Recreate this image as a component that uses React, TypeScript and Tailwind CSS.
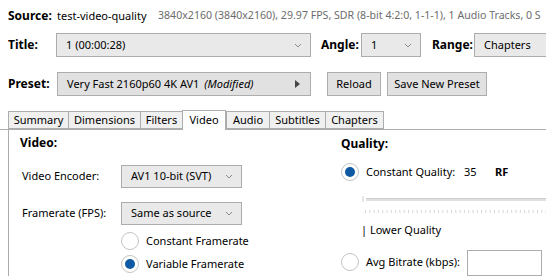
import React from "react";

const Chevron = () => (
  <svg width="8" height="5" viewBox="0 0 8 5" className="shrink-0">
    <polyline points="1,1 4,4 7,1" fill="none" stroke="#8a8a8a" strokeWidth="1" />
  </svg>
);

const Combo = ({ text, className }: { text: string; className: string }) => (
  <div className={"shrink-0 flex items-center justify-between border border-[#acacac] bg-[#e9e9e9] pl-[9px] pr-[8px] " + className}>
    <span className="whitespace-nowrap">{text}</span>
    <Chevron />
  </div>
);

const Radio = ({ on }: { on?: boolean }) => (
  <div className="w-[18px] h-[18px] rounded-full border border-[#c4c4c4] bg-white flex items-center justify-center shrink-0">
    {on && <div className="w-[10px] h-[10px] rounded-full bg-[#0f5aa3]" />}
  </div>
);

const Tab = ({ label, active, w }: { label: string; active?: boolean; w: string }) =>
  active ? (
    <div className={"shrink-0 h-[20px] border border-b-0 border-[#acacac] bg-white flex items-center justify-center -mb-px relative z-10 " + w}>
      {label}
    </div>
  ) : (
    <div className={"shrink-0 h-[18px] border border-r-0 border-[#acacac] bg-[#f0f0f0] flex items-center justify-center " + w}>
      {label}
    </div>
  );

export default function App() {
  return (
    <div
      className="w-[546px] h-[276px] overflow-hidden bg-white text-[11px] text-black flex flex-col"
      style={{ fontFamily: '"Noto Sans", "Segoe UI", sans-serif' }}
    >
      <div className="mt-[8px] h-[16px] pl-[8px] flex items-center whitespace-nowrap overflow-hidden">
        <span className="shrink-0 font-bold w-[49px] text-[12px]">Source:</span>
        <span className="shrink-0 w-[101px]">test-video-quality</span>
        <span className="shrink-0 text-[#6d6d6d] text-[10.6px]">
          3840x2160 (3840x2160), 29.97 FPS, SDR (8-bit 4:2:0, 1-1-1), 1 Audio Tracks, 0 S
        </span>
      </div>

      <div className="mt-[9px] h-[24px] pl-[8px] flex items-center whitespace-nowrap">
        <span className="shrink-0 font-bold w-[48px] text-[12px]">Title:</span>
        <Combo text="1  (00:00:28)" className="w-[255px] h-[24px]" />
        <span className="shrink-0 font-bold ml-[10px] w-[40px] text-[12px]">Angle:</span>
        <Combo text="1" className="w-[60px] h-[24px]" />
        <span className="shrink-0 font-bold ml-[11px] w-[42px] text-[12px]">Range:</span>
        <Combo text="Chapters" className="w-[90px] h-[24px]" />
      </div>

      <div className="mt-[15px] h-[24px] pl-[8px] flex items-center whitespace-nowrap">
        <span className="shrink-0 font-bold w-[49px] text-[12px]">Preset:</span>
        <div className="shrink-0 w-[254px] h-[24px] border border-[#adadad] bg-[#e1e1e1] flex items-center justify-between pl-[9px] pr-[10px]">
          <span>
            Very Fast 2160p60 4K AV1 <i className="ml-[2px]">(Modified)</i>
          </span>
          <svg width="5" height="8" viewBox="0 0 5 8">
            <polygon points="0,0 5,4 0,8" fill="#444" />
          </svg>
        </div>
        <div className="shrink-0 ml-[16px] w-[54px] h-[24px] border border-[#adadad] bg-[#e1e1e1] flex items-center justify-center">
          Reload
        </div>
        <div className="shrink-0 ml-[6px] w-[100px] h-[24px] border border-[#adadad] bg-[#e1e1e1] flex items-center justify-center">
          Save New Preset
        </div>
      </div>

      <div className="mt-[14px] pl-[8px] flex items-end whitespace-nowrap border-b border-[#acacac]">
        <Tab label="Summary" w="w-[60px]" />
        <Tab label="Dimensions" w="w-[72px]" />
        <Tab label="Filters" w="w-[42px]" />
        <Tab label="Video" w="w-[44px]" active />
        <Tab label="Audio" w="w-[43px]" />
        <Tab label="Subtitles" w="w-[56px]" />
        <div className="shrink-0 h-[18px] w-[59px] border border-[#acacac] bg-[#f0f0f0] flex items-center justify-center">
          Chapters
        </div>
      </div>

      <div className="ml-[8px] flex-1 border-l border-[#acacac] flex whitespace-nowrap">
        <div className="shrink-0 w-[332px] flex flex-col pl-[11px]">
          <div className="mt-[5px] h-[16px] flex items-center font-bold text-[12px]">Video:</div>
          <div className="mt-[14px] h-[23px] flex items-center">
            <span className="shrink-0 w-[101px] pl-[2px]">Video Encoder:</span>
            <Combo text="AV1 10-bit (SVT)" className="w-[121px] h-[23px]" />
          </div>
          <div className="mt-[14px] h-[23px] flex items-center">
            <span className="shrink-0 w-[101px] pl-[2px]">Framerate (FPS):</span>
            <Combo text="Same as source" className="w-[121px] h-[23px]" />
          </div>
          <div className="mt-[5px] h-[22px] flex items-center pl-[101px]">
            <Radio />
            <span className="ml-[7px]">Constant Framerate</span>
          </div>
          <div className="mt-[1px] h-[22px] flex items-center pl-[101px]">
            <Radio on />
            <span className="ml-[7px]">Variable Framerate</span>
          </div>
        </div>

        <div className="flex-1 min-w-0 flex flex-col">
          <div className="mt-[6px] h-[16px] flex items-center font-bold text-[12px]">Quality:</div>
          <div className="mt-[9px] h-[22px] flex items-center">
            <Radio on />
            <span className="shrink-0 ml-[7px] w-[98px]">Constant Quality:</span>
            <span className="shrink-0 w-[31px]">35</span>
            <span className="shrink-0 font-bold">RF</span>
          </div>
          <div className="mt-[8px] h-[16px] relative pl-[25px]">
            <svg width="200" height="16" viewBox="0 0 200 16">
              <rect x="0" y="7" width="200" height="3" fill="#e0e0e0" />
              <rect x="0" y="7" width="200" height="1" fill="#cfcfcf" />
            </svg>
            <div className="absolute left-[21px] top-[5px] w-[2px] h-[6px] bg-[#e6e6e6]" />
          </div>
          <div className="h-[8px] pl-[24px]">
            <svg width="200" height="8" viewBox="0 0 200 8">
              {Array.from({ length: 46 }).map((_, i) => (
                <rect key={i} x={i * 4.3} y="3" width="1" height="3" fill="#d6d6d6" />
              ))}
            </svg>
          </div>
          <div className="mt-[7px] h-[16px] flex items-center pl-[20px]">| Lower Quality</div>
          <div className="mt-[13px] h-[22px] flex items-start">
            <div className="shrink-0 h-[22px] flex items-center">
              <Radio />
              <span className="ml-[7px] w-[101px]">Avg Bitrate (kbps):</span>
            </div>
            <div className="shrink-0 w-[75px] h-[26px] border border-[#acacac] bg-white -mt-[1px]" />
          </div>
        </div>
      </div>
    </div>
  );
}
